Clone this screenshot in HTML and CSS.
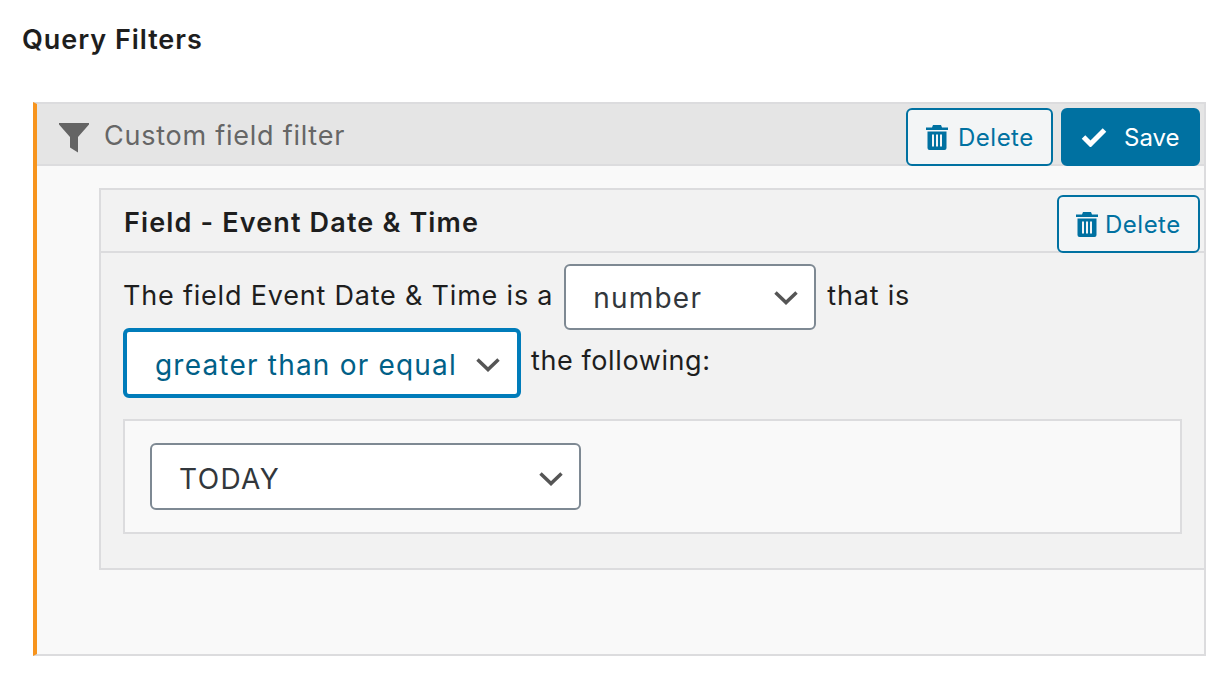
FILE: index.html
```html
<!DOCTYPE html>
<html lang="en">
<head>
<meta charset="utf-8">
<title>Query Filters</title>
<link rel="stylesheet" href="styles.css">
</head>
<body>
<h2 class="page-title">Query Filters</h2>
<section class="panel">
  <header class="panel-head">
    <svg class="funnel" viewBox="0 0 30 30" width="30" height="30"><path d="M0 0H30V1.500L19 14V29.500L11 24.500V14L0 1.500Z"/></svg>
    <span class="panel-title">Custom field filter</span>
    <div class="panel-actions">
      <button class="btn btn-outline btn-large" type="button">
        <svg class="trash" viewBox="0 0 22 25" width="22" height="25"><path fill-rule="evenodd" d="M7 0H15L16 2.500H22V5H0V2.500H6ZM1.500 6.500H20.500V23A2 2 0 0 1 18.500 25H3.500A2 2 0 0 1 1.500 23ZM6 9.500V21.500H8V9.500ZM10 9.500V21.500H12V9.500ZM14 9.500V21.500H16V9.500Z"/></svg>
        <span class="btn-label">Delete</span>
      </button>
      <button class="btn btn-primary" type="button">
        <svg class="check" viewBox="0 0 26 20" width="26" height="20"><path d="M2.500 10L9.500 17L23.500 3" fill="none" stroke="currentColor" stroke-width="5"/></svg>
        <span class="btn-label">Save</span>
      </button>
    </div>
  </header>
  <div class="panel-body">
    <article class="card">
      <header class="card-head">
        <h3 class="card-title">Field - Event Date &amp; Time</h3>
        <button class="btn btn-outline btn-small" type="button">
          <svg class="trash" viewBox="0 0 22 25" width="22" height="25"><path fill-rule="evenodd" d="M7 0H15L16 2.500H22V5H0V2.500H6ZM1.500 6.500H20.500V23A2 2 0 0 1 18.500 25H3.500A2 2 0 0 1 1.500 23ZM6 9.500V21.500H8V9.500ZM10 9.500V21.500H12V9.500ZM14 9.500V21.500H16V9.500Z"/></svg>
          <span class="btn-label">Delete</span>
        </button>
      </header>
      <div class="card-body">
        <div class="sentence sentence-first">
          <span class="sentence-text">The field Event Date &amp; Time is a</span>
          <span class="select-wrap select-type">
            <select class="select" aria-label="Type"><option>number</option></select>
            <svg class="chevron" viewBox="0 0 24 14" width="24" height="14"><path d="M1.500 1.500L12 11.500L22.500 1.500" fill="none" stroke="currentColor" stroke-width="3.500"/></svg>
          </span>
          <span class="sentence-text">that is</span>
        </div>
        <div class="sentence sentence-second">
          <span class="select-wrap select-op">
            <select class="select select-focus" aria-label="Comparison"><option>greater than or equal</option></select>
            <svg class="chevron" viewBox="0 0 24 14" width="24" height="14"><path d="M1.500 1.500L12 11.500L22.500 1.500" fill="none" stroke="currentColor" stroke-width="3.500"/></svg>
          </span>
          <span class="sentence-text following">the following:</span>
        </div>
        <div class="value-box">
          <span class="select-wrap select-value">
            <select class="select select-today" aria-label="Value"><option>TODAY</option></select>
            <svg class="chevron" viewBox="0 0 24 14" width="24" height="14"><path d="M1.500 1.500L12 11.500L22.500 1.500" fill="none" stroke="currentColor" stroke-width="3.500"/></svg>
          </span>
        </div>
      </div>
    </article>
  </div>
</section>
</body>
</html>
```

FILE: styles.css
```css
* { box-sizing: border-box; }
html, body { margin: 0; background: #fff; }
body {
  width: 1230px;
  height: 684px;
  overflow: hidden;
  padding: 23px 24px 0 22px;
  font-family: Inter, "Liberation Sans", sans-serif;
  font-size: 27px;
  line-height: 34px;
  color: #1e1e1e;
}
.page-title {
  margin: 0 0 45px;
  font-size: 27px;
  font-weight: 600;
  line-height: 34px;
  letter-spacing: 0.95px;
}
.panel {
  margin-left: 11px;
  height: 554px;
  display: flex;
  flex-direction: column;
  background: #f9f9f9;
  border: 2px solid #dcdcde;
  border-left: 4px solid #f7941d;
}
.panel-head {
  height: 62px;
  flex: none;
  display: flex;
  align-items: center;
  padding: 6px 4px 0 22px;
  background: #e5e5e5;
  border-bottom: 2px solid #dcdcde;
}
.funnel { fill: #646464; flex: none; margin-top: 2px; }
.panel-title {
  margin-left: 15px;
  margin-top: -3px;
  color: #666;
  font-size: 27px;
  letter-spacing: 0.75px;
}
.panel-actions {
  margin-left: auto;
  display: flex;
  gap: 8px;
}
.btn {
  display: inline-flex;
  align-items: center;
  height: 58px;
  border-radius: 6px;
  font: inherit;
  font-size: 24px;
  letter-spacing: 0.5px;
  cursor: pointer;
}
.btn-label { margin-top: 2px; }
.btn-outline {
  background: #f3f5f6;
  border: 2px solid #0071a1;
  color: #0071a1;
}
.btn-primary {
  width: 139px;
  background: #0071a1;
  border: 2px solid #0071a1;
  color: #fff;
  padding: 0 0 0 18px;
  gap: 17px;
  letter-spacing: 0;
}
.btn-large { width: 147px; padding: 0 0 0 18px; gap: 10px; }
.btn-small { width: 143px; padding: 0 0 0 17px; gap: 7px; margin-bottom: -2px; }
.trash { fill: currentColor; flex: none; }
.check { flex: none; }
.panel-body {
  flex: 1;
  padding: 22px 0 0 62px;
}
.card {
  height: 382px;
  background: #f2f2f2;
  border: 2px solid #dcdcde;
  border-right: 0;
}
.card-head {
  height: 63px;
  display: flex;
  align-items: flex-end;
  justify-content: space-between;
  padding: 0 4px 0 23px;
  border-bottom: 2px solid #dcdcde;
}
.card-title {
  align-self: center;
  margin: 5px 0 0;
  font-size: 27px;
  font-weight: 600;
  letter-spacing: 1.15px;
}
.card-body { padding: 11px 22px 0 22px; }
.sentence { display: flex; align-items: center; }
.sentence-text { letter-spacing: 0.8px; }
.sentence-first { gap: 11px; height: 66px; }
.sentence-first .sentence-text { margin-top: -2px; }
.sentence-second { gap: 10px; height: 70px; margin-top: -2px; }
.following { margin-top: -4px; letter-spacing: 0.6px; }
.select-wrap {
  position: relative;
  display: block;
  flex: none;
}
.select-type { width: 252px; height: 66px; }
.select-op { width: 398px; height: 70px; }
.select-value { width: 431px; height: 67px; }
.select {
  appearance: none;
  display: block;
  width: 100%;
  height: 100%;
  margin: 0;
  padding: 2px 0 0 27px;
  background: #fff;
  border: 2px solid #7e8993;
  border-radius: 6px;
  font: inherit;
  font-size: 28px;
  letter-spacing: 1.2px;
  color: #32373c;
}
.select-focus {
  padding: 4px 0 0 28px;
  border: 4px solid #007cba;
  color: #016087;
}
.select-today {
  padding: 4px 0 0 27px;
  letter-spacing: 1.4px;
}
.chevron {
  position: absolute;
  right: 18px;
  top: 50%;
  margin-top: -6px;
  color: #555;
  pointer-events: none;
}
.select-op { margin-right: 1px; width: 397px; margin-left: 0; }
.select-op .select { width: 398px; }
.select-op .chevron { right: 20px; margin-top: -5px; }
.select-value .chevron { margin-top: -5px; }
.value-box {
  margin-top: 21px;
  height: 115px;
  background: #f9f9f9;
  border: 2px solid #dcdcde;
  padding: 22px 25px;
}
```
